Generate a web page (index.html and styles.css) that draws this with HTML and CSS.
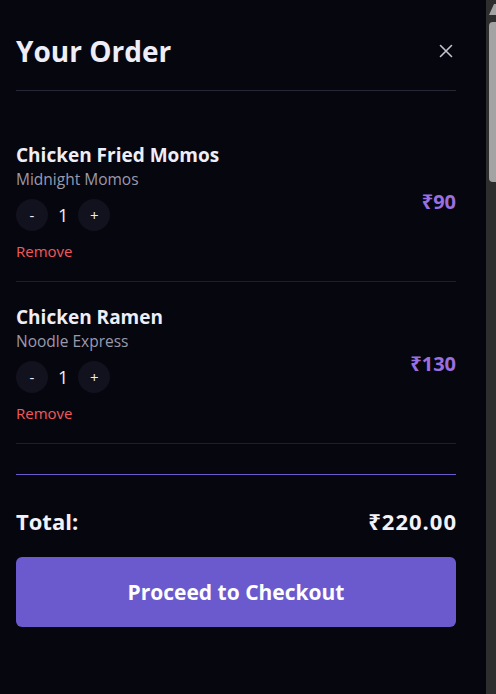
FILE: index.html
```html
<!DOCTYPE html>
<html lang="en">
<head>
<meta charset="utf-8">
<title>Your Order</title>
<link rel="stylesheet" href="styles.css">
</head>
<body>
<div class="page">
  <aside class="drawer">
    <header class="drawer-header">
      <h2 class="drawer-title">Your Order</h2>
      <button class="close-btn" aria-label="Close">
        <svg width="14" height="14" viewBox="0 0 14 14"><path d="M1.5 1.5 L12.5 12.5 M12.5 1.5 L1.5 12.5" stroke="#c4c4d0" stroke-width="1.6" stroke-linecap="round" fill="none"/></svg>
      </button>
    </header>

    <ul class="items">
      <li class="item">
        <div class="item-info">
          <h3 class="item-name">Chicken Fried Momos</h3>
          <p class="item-shop">Midnight Momos</p>
          <div class="qty">
            <button class="qty-btn">-</button>
            <span class="qty-count">1</span>
            <button class="qty-btn">+</button>
          </div>
          <button class="remove">Remove</button>
        </div>
        <div class="item-price">₹90</div>
      </li>
      <li class="item">
        <div class="item-info">
          <h3 class="item-name">Chicken Ramen</h3>
          <p class="item-shop">Noodle Express</p>
          <div class="qty">
            <button class="qty-btn">-</button>
            <span class="qty-count">1</span>
            <button class="qty-btn">+</button>
          </div>
          <button class="remove">Remove</button>
        </div>
        <div class="item-price">₹130</div>
      </li>
    </ul>

    <footer class="summary">
      <div class="total-row">
        <span>Total:</span>
        <span class="total-amount">₹220.00</span>
      </div>
      <button class="checkout">Proceed to Checkout</button>
    </footer>
  </aside>
  <div class="scrollbar" aria-hidden="true">
    <svg class="scroll-arrow" width="10" height="16" viewBox="0 0 10 16"><polygon points="8,4 10,4 10,15 3,15" fill="#a3a3a3"/></svg>
    <div class="scroll-thumb"></div>
  </div>
</div>
</body>
</html>
```
FILE: styles.css
```css
html {
  background: #06060f;
}
body {
  margin: 0;
  background: #06060f;
  font-family: "Open Sans", "Noto Sans", "DejaVu Sans", sans-serif;
  color: #eeeef8;
}
.page {
  display: flex;
  height: 694px;
  overflow: hidden;
}
.drawer {
  flex: 1;
  padding: 0 30px 0 16px;
}
.drawer-header {
  display: flex;
  align-items: center;
  justify-content: space-between;
  padding: 33px 0 21px;
  border-bottom: 1px solid #262634;
}
.drawer-title {
  margin: 0;
  font-size: 28px;
  line-height: 36px;
  font-weight: 700;
  color: #eeeef8;
}
.close-btn {
  display: flex;
  align-items: center;
  justify-content: center;
  width: 20px;
  height: 20px;
  padding: 0;
  border: 0;
  background: none;
}
.items {
  list-style: none;
  margin: 29px 0 0;
  padding: 0;
}
.item {
  display: flex;
  align-items: center;
  justify-content: space-between;
  padding: 21px 0 19px;
  border-bottom: 1px solid #1f1f2c;
}
.item-info {
  display: flex;
  flex-direction: column;
  align-items: flex-start;
}
.item-name {
  margin: 0;
  font-size: 19px;
  line-height: 28px;
  font-weight: 700;
  color: #eeeef8;
}
.item-shop {
  margin: 0;
  font-size: 15.5px;
  line-height: 20px;
  color: #9a9aab;
}
.qty {
  display: flex;
  align-items: center;
  gap: 10px;
  margin-top: 10px;
}
.qty-btn {
  width: 32px;
  height: 32px;
  padding: 0;
  border: 0;
  border-radius: 50%;
  background: #12121f;
  color: #eeeef8;
  font-family: inherit;
  font-size: 15px;
  line-height: 32px;
}
.qty-count {
  min-width: 10px;
  text-align: center;
  font-size: 18px;
  line-height: 24px;
  color: #eeeef8;
}
.remove {
  margin-top: 9px;
  padding: 0;
  border: 0;
  background: none;
  font-family: inherit;
  font-size: 15px;
  line-height: 22px;
  color: #f25a5a;
}
.item-price {
  font-size: 20px;
  font-weight: 700;
  color: #9a6fe0;
}
.summary {
  margin-top: 30px;
  border-top: 1px solid #6a5acd;
  padding-top: 32px;
}
.total-row {
  display: flex;
  justify-content: space-between;
  font-size: 22px;
  line-height: 28px;
  font-weight: 700;
  color: #f2f2fa;
}
.total-amount {
  letter-spacing: 1px;
  margin-right: -1px;
}
.checkout {
  display: block;
  width: 100%;
  margin-top: 22px;
  padding: 21px 0;
  border: 0;
  border-radius: 6px;
  background: #6a5acd;
  color: #ffffff;
  font-family: inherit;
  font-size: 21px;
  line-height: 28px;
  font-weight: 700;
}
.scrollbar {
  width: 10px;
  flex-shrink: 0;
  background: #2e2e2e;
  display: flex;
  flex-direction: column;
  align-items: flex-end;
}
.scroll-arrow {
  display: block;
}
.scroll-thumb {
  margin-top: 6px;
  width: 7px;
  height: 160px;
  border-radius: 4px 0 0 4px;
  background: #a3a3a3;
}
```
